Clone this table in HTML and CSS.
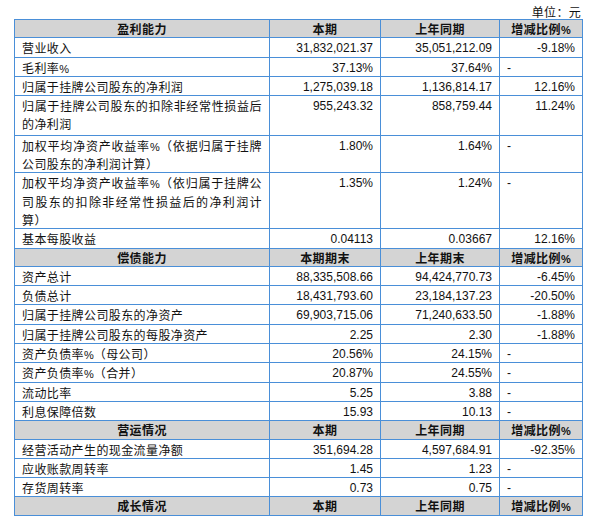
FILE: index.html
```html
<!DOCTYPE html>
<html lang="zh-CN">
<head>
<meta charset="utf-8">
<title>主要财务数据</title>
<link rel="stylesheet" href="styles.css">
</head>
<body>
<div class="page">
  <div class="unit">单位：元</div>
  <table class="fin">
    <colgroup>
      <col class="c1"><col class="c2"><col class="c3"><col class="c4">
    </colgroup>
    <tbody>
      <tr class="hd"><td>盈利能力</td><td>本期</td><td>上年同期</td><td>增减比例<span class="pc">%</span></td></tr>
      <tr><td class="lb">营业收入</td><td class="num">31,832,021.37</td><td class="num">35,051,212.09</td><td class="num">-9.18%</td></tr>
      <tr><td class="lb">毛利率<span class="pc">%</span></td><td class="num">37.13%</td><td class="num">37.64%</td><td class="dash">-</td></tr>
      <tr><td class="lb">归属于挂牌公司股东的净利润</td><td class="num">1,275,039.18</td><td class="num">1,136,814.17</td><td class="num">12.16%</td></tr>
      <tr class="tall"><td class="lb"><span class="jl">归属于挂牌公司股东的扣除非经常性损益后</span><span class="ll">的净利润</span></td><td class="num">955,243.32</td><td class="num">858,759.44</td><td class="num">11.24%</td></tr>
      <tr><td class="lb"><span class="jl">加权平均净资产收益率<span class="pc">%</span>（依据归属于挂牌</span><span class="ll">公司股东的净利润计算）</span></td><td class="num">1.80%</td><td class="num">1.64%</td><td class="dash">-</td></tr>
      <tr><td class="lb"><span class="jl">加权平均净资产收益率<span class="pc">%</span>（依归属于挂牌公</span><span class="jl">司股东的扣除非经常性损益后的净利润计</span><span class="ll">算）</span></td><td class="num">1.35%</td><td class="num">1.24%</td><td class="dash">-</td></tr>
      <tr><td class="lb">基本每股收益</td><td class="num">0.04113</td><td class="num">0.03667</td><td class="num">12.16%</td></tr>
      <tr class="hd"><td>偿债能力</td><td>本期期末</td><td>上年期末</td><td>增减比例<span class="pc">%</span></td></tr>
      <tr><td class="lb">资产总计</td><td class="num">88,335,508.66</td><td class="num">94,424,770.73</td><td class="num">-6.45%</td></tr>
      <tr><td class="lb">负债总计</td><td class="num">18,431,793.60</td><td class="num">23,184,137.23</td><td class="num">-20.50%</td></tr>
      <tr><td class="lb">归属于挂牌公司股东的净资产</td><td class="num">69,903,715.06</td><td class="num">71,240,633.50</td><td class="num">-1.88%</td></tr>
      <tr><td class="lb">归属于挂牌公司股东的每股净资产</td><td class="num">2.25</td><td class="num">2.30</td><td class="num">-1.88%</td></tr>
      <tr><td class="lb">资产负债率<span class="pc">%</span>（母公司）</td><td class="num">20.56%</td><td class="num">24.15%</td><td class="dash">-</td></tr>
      <tr><td class="lb">资产负债率<span class="pc">%</span>（合并）</td><td class="num">20.87%</td><td class="num">24.55%</td><td class="dash">-</td></tr>
      <tr><td class="lb">流动比率</td><td class="num">5.25</td><td class="num">3.88</td><td class="dash">-</td></tr>
      <tr><td class="lb">利息保障倍数</td><td class="num">15.93</td><td class="num">10.13</td><td class="dash">-</td></tr>
      <tr class="hd"><td>营运情况</td><td>本期</td><td>上年同期</td><td>增减比例<span class="pc">%</span></td></tr>
      <tr><td class="lb">经营活动产生的现金流量净额</td><td class="num">351,694.28</td><td class="num">4,597,684.91</td><td class="num">-92.35%</td></tr>
      <tr><td class="lb">应收账款周转率</td><td class="num">1.45</td><td class="num">1.23</td><td class="dash">-</td></tr>
      <tr><td class="lb">存货周转率</td><td class="num">0.73</td><td class="num">0.75</td><td class="dash">-</td></tr>
      <tr class="hd"><td>成长情况</td><td>本期</td><td>上年同期</td><td>增减比例<span class="pc">%</span></td></tr>
    </tbody>
  </table>
</div>
</body>
</html>
```

FILE: styles.css
```css
html, body {
  margin: 0;
  padding: 0;
  background: #ffffff;
}

.page {
  padding-left: 14px;
  width: 568px;
  font-family: "Noto Sans CJK SC", sans-serif;
  color: #111111;
}

.unit {
  height: 19px;
  line-height: 24px;
  font-size: 12px;
  letter-spacing: 0.3px;
  text-align: right;
  padding-right: 1px;
}

.fin {
  border-collapse: collapse;
  table-layout: fixed;
  width: 568px;
}

.c1 { width: 255px; }
.c2 { width: 111px; }
.c3 { width: 119px; }
.c4 { width: 83px; }

.fin td {
  border: 1px solid #4a8fd8;
  padding: 2px 7px 0;
  line-height: 16.3px;
  vertical-align: top;
  font-size: 12px;
}

.fin .tall td {
  padding-bottom: 2px;
}

.lb {
  letter-spacing: 0.4px;
  text-align: left;
}

.jl {
  display: block;
  text-align: justify;
  text-align-last: justify;
}

.ll {
  display: block;
}

.jl + .jl,
.jl + .ll {
  margin-top: 2px;
}

.pc {
  font-family: "Liberation Sans", sans-serif;
  font-size: 11px;
  letter-spacing: 0;
  line-height: 0;
}

.num {
  text-align: right;
  font-family: "Liberation Sans", sans-serif;
  font-size: 10.5px;
}

.dash {
  text-align: left;
  font-family: "Liberation Sans", sans-serif;
  font-size: 10.5px;
}

.hd td {
  background: #d4d4d4;
  font-weight: 700;
  text-align: center;
  vertical-align: middle;
  letter-spacing: 0.4px;
  padding-top: 1px;
}
```
